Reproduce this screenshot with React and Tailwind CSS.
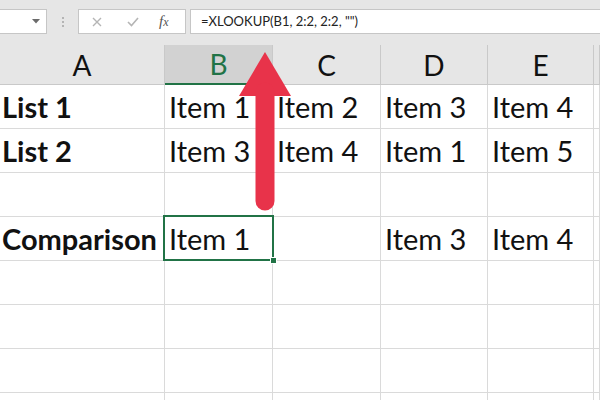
import React from 'react'

const cols = ['A', 'B', 'C', 'D', 'E', '']

const rows = [
  ['List 1', 'Item 1', 'Item 2', 'Item 3', 'Item 4'],
  ['List 2', 'Item 3', 'Item 4', 'Item 1', 'Item 5'],
  ['', '', '', '', ''],
  ['Comparison', 'Item 1', '', 'Item 3', 'Item 4'],
  ['', '', '', '', ''],
  ['', '', '', '', ''],
  ['', '', '', '', ''],
  ['', '', '', '', ''],
]

function Toolbar() {
  return (
    <div className="h-[45px] bg-[#e6e6e6] flex items-start pt-[9px]">
      <div className="w-[47px] h-[25px] bg-white border border-[#c6c6c6] border-l-0 flex items-center justify-end pr-[6px]">
        <svg width="8" height="5" viewBox="0 0 8 5">
          <path d="M0 0 L8 0 L4 4.5 Z" fill="#6b6b6b" />
        </svg>
      </div>
      <div className="w-[31px] h-[25px] flex flex-col items-center justify-center gap-[2px]">
        <div className="w-[2px] h-[2px] bg-[#b4b4b4]" />
        <div className="w-[2px] h-[2px] bg-[#b4b4b4]" />
        <div className="w-[2px] h-[2px] bg-[#b4b4b4]" />
      </div>
      <div className="w-[108px] h-[25px] bg-white border border-[#c6c6c6] flex items-center">
        <svg className="ml-[13px]" width="10" height="10" viewBox="0 0 10 10">
          <path d="M1 1 L9 9 M9 1 L1 9" stroke="#b5b5b5" strokeWidth="1.4" />
        </svg>
        <svg className="ml-[25px]" width="12" height="10" viewBox="0 0 12 10">
          <path d="M1 5 L4.5 8.5 L11 1" stroke="#b5b5b5" strokeWidth="1.6" fill="none" />
        </svg>
        <span className="ml-[20px] text-[15px] italic text-[#555] leading-none" style={{ fontFamily: '"Liberation Serif", serif' }}>
          f<span className="text-[12px]">x</span>
        </span>
      </div>
      <div className="ml-[4px] flex-1 h-[25px] bg-white border border-[#c6c6c6] border-r-0 flex items-center pl-[10px] text-[13px] text-[#222]">
        =XLOOKUP(B1, 2:2, 2:2, "")
      </div>
    </div>
  )
}

export default function App() {
  return (
    <div className="w-[600px] h-[400px] overflow-hidden bg-white relative" style={{ fontFamily: 'Lato, "Open Sans", sans-serif' }}>
      <Toolbar />
      <div className="grid grid-cols-[165px_108px_108px_107px_106px_1fr]">
        {cols.map((c, i) => (
          <div
            key={'h' + i}
            className={
              'h-[40px] flex items-center justify-center text-[28px] border-r border-[#c9c9c9] ' +
              (c === 'B'
                ? 'bg-[#d2d2d2] text-[#217346] border-b-2 border-b-[#217346]'
                : 'bg-[#e6e6e6] text-[#111] border-b border-b-[#c9c9c9]')
            }
          >
            {c}
          </div>
        ))}
        {rows.map((r, ri) =>
          [...r, ''].map((v, ci) => {
            const sel = ri === 3 && ci === 1
            return (
              <div
                key={ri + '-' + ci}
                className={
                  'h-[44px] flex items-center text-[29px] text-[#111] border-r border-b border-[#dadada] whitespace-nowrap ' +
                  (ci === 0 ? 'pl-[2px] font-bold' : 'pl-[4px]') +
                  (sel ? ' relative z-10' : '')
                }
              >
                {v}
                {sel && (
                  <div className="absolute left-[-2px] top-[-2px] right-[-2px] bottom-[-1px] border-2 border-[#217346]">
                    <div className="absolute right-[-5px] bottom-[-5px] w-[7px] h-[7px] bg-[#217346] border border-white" />
                  </div>
                )}
              </div>
            )
          })
        )}
      </div>
      <svg className="absolute left-0 top-0 pointer-events-none z-20" width="600" height="400" viewBox="0 0 600 400">
        <path d="M265 52 L291 96 L239 96 Z" fill="#e8334a" />
        <line x1="265" y1="92" x2="265" y2="201" stroke="#e8334a" strokeWidth="19" strokeLinecap="round" />
      </svg>
    </div>
  )
}
